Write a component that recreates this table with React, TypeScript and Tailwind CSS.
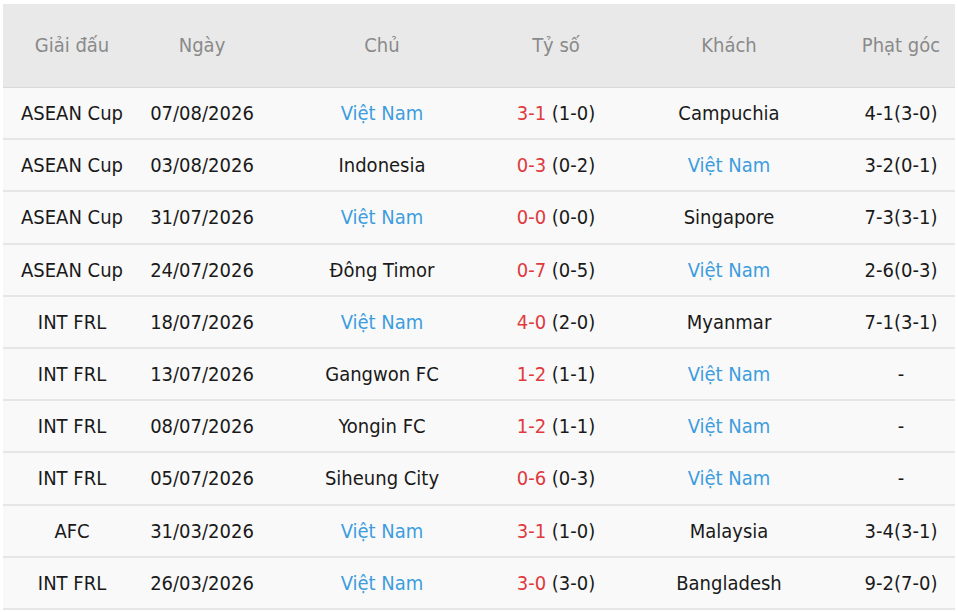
const rows = [
  { league: 'ASEAN Cup', date: '07/08/2026', home: 'Việt Nam', score: '3-1', half: '(1-0)', away: 'Campuchia', corner: '4-1(3-0)' },
  { league: 'ASEAN Cup', date: '03/08/2026', home: 'Indonesia', score: '0-3', half: '(0-2)', away: 'Việt Nam', corner: '3-2(0-1)' },
  { league: 'ASEAN Cup', date: '31/07/2026', home: 'Việt Nam', score: '0-0', half: '(0-0)', away: 'Singapore', corner: '7-3(3-1)' },
  { league: 'ASEAN Cup', date: '24/07/2026', home: 'Đông Timor', score: '0-7', half: '(0-5)', away: 'Việt Nam', corner: '2-6(0-3)' },
  { league: 'INT FRL', date: '18/07/2026', home: 'Việt Nam', score: '4-0', half: '(2-0)', away: 'Myanmar', corner: '7-1(3-1)' },
  { league: 'INT FRL', date: '13/07/2026', home: 'Gangwon FC', score: '1-2', half: '(1-1)', away: 'Việt Nam', corner: '-' },
  { league: 'INT FRL', date: '08/07/2026', home: 'Yongin FC', score: '1-2', half: '(1-1)', away: 'Việt Nam', corner: '-' },
  { league: 'INT FRL', date: '05/07/2026', home: 'Siheung City', score: '0-6', half: '(0-3)', away: 'Việt Nam', corner: '-' },
  { league: 'AFC', date: '31/03/2026', home: 'Việt Nam', score: '3-1', half: '(1-0)', away: 'Malaysia', corner: '3-4(3-1)' },
  { league: 'INT FRL', date: '26/03/2026', home: 'Việt Nam', score: '3-0', half: '(3-0)', away: 'Bangladesh', corner: '9-2(7-0)' },
];

const cols = 'grid grid-cols-[138px_122px_238px_110px_236px_108px]';

function Team({ name }: { name: string }) {
  return <span className={name === 'Việt Nam' ? 'text-[#3d9ddd]' : 'text-[#1a1a1a]'}>{name}</span>;
}

export default function App() {
  return (
    <div className="w-[958px] h-[612px] bg-white pl-[3px] pt-[4px] font-['Tahoma','DejaVu_Sans_Condensed','DejaVu_Sans',sans-serif] text-[20px] leading-none">
      <div className="w-[952px]">
        {/* header */}
        <div className={`${cols} h-[84px] items-center bg-[#e9e9e9] border-b border-[#d9d9d9] text-[#8a8a8a] text-center pb-[2px]`}>
          <div>Giải đấu</div>
          <div>Ngày</div>
          <div>Chủ</div>
          <div>Tỷ số</div>
          <div>Khách</div>
          <div>Phạt góc</div>
        </div>
        {rows.map((r, i) => (
          <div
            key={i}
            className={`${cols} h-[52.2px] items-center bg-[#f9f9f9] border-b-2 border-[#e6e6e6] text-center text-[#1a1a1a]`}
          >
            <div>{r.league}</div>
            <div>{r.date}</div>
            <div><Team name={r.home} /></div>
            <div>
              <span className="text-[#e0393e]">{r.score}</span> {r.half}
            </div>
            <div><Team name={r.away} /></div>
            <div>{r.corner}</div>
          </div>
        ))}
      </div>
    </div>
  );
}
